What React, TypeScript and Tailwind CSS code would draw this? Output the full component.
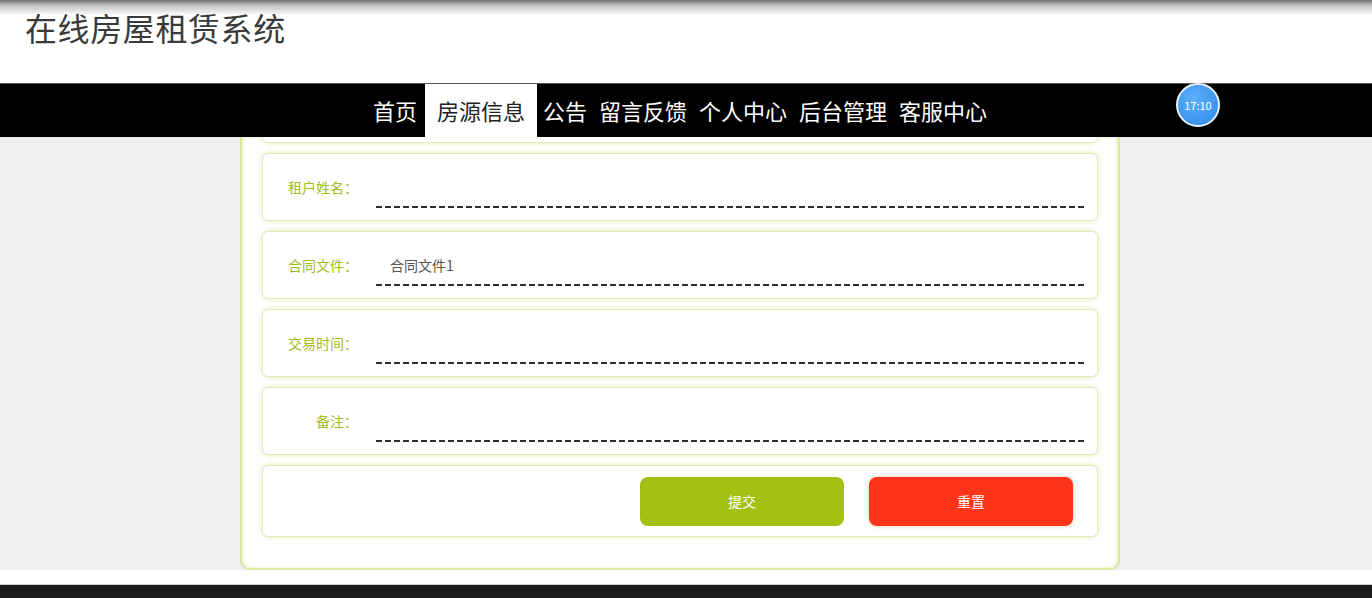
import React from "react";

const navItems = ["首页", "房源信息", "公告", "留言反馈", "个人中心", "后台管理", "客服中心"];

const fields = [
  { label: "租户姓名：", value: "" },
  { label: "合同文件：", value: "合同文件1" },
  { label: "交易时间：", value: "" },
  { label: "备注：", value: "" },
];

function FieldCard({ label, value }: { label: string; value: string }) {
  return (
    <div className="h-[68px] shrink-0 flex items-center rounded-md border border-[#e3ebbd] bg-white shadow-[0_0_5px_#dfe9ad]">
      <div className="w-[95px] text-right text-[14px] text-[#a2bc1c]">{label}</div>
      <div className="ml-[18px] mr-[12px] flex-1 h-[42px] flex items-center pl-[14px] bg-[repeating-linear-gradient(90deg,#2e2e2e_0px,#2e2e2e_6px,transparent_6px,transparent_9px)] bg-no-repeat bg-bottom bg-[length:100%_2px] text-[14px] text-[#555]">
        {value}
      </div>
    </div>
  );
}

export default function App() {
  return (
    <div className="w-[1372px] h-[598px] overflow-hidden bg-white font-['Noto_Sans_CJK_SC','Noto_Sans',sans-serif]">
      {/* title */}
      <header className="h-[83px] bg-[linear-gradient(to_bottom,#6f6f6f_0px,#bdbdbd_5px,#ffffff_15px)] pl-[25px] pt-[7px]">
        <h1 className="text-[32px] leading-[40px] text-[#3a3a3a] tracking-[0.6px]">在线房屋租赁系统</h1>
      </header>

      {/* nav */}
      <nav className="relative h-[54px] bg-black border-t border-[#555] flex justify-center pr-[12px]">
        {navItems.map((item) => (
          <a
            key={item}
            className={
              item === "房源信息"
                ? "h-full flex items-center ml-[2px] px-3 bg-white text-[#222] text-[22px]"
                : "h-full flex items-center px-[6px] text-white text-[22px]"
            }
          >
            {item}
          </a>
        ))}
        <div className="absolute left-[1176px] top-[-1px] w-[44px] h-[44px] rounded-full border-2 border-[#e8f3ff] bg-[radial-gradient(circle_at_40%_35%,#5fb0fb,#2a87ea)] flex items-center justify-center text-white text-[11px]">
          17:10
        </div>
      </nav>

      {/* content */}
      <main className="h-[433px] bg-[#efefef] overflow-hidden flex justify-center pr-[12px]">
        <div className="w-[880px] h-full bg-white border-x-2 border-b-2 border-[#dbe7a2] rounded-b-[10px] shadow-[inset_2px_0_3px_#eef4d2,inset_-2px_0_3px_#eef4d2] px-5 flex flex-col gap-[10px]">
          <div className="h-[68px] shrink-0 -mt-[62px] rounded-md border border-[#e3ebbd] bg-white shadow-[0_0_5px_#dfe9ad]" />
          {fields.map((f) => (
            <FieldCard key={f.label} label={f.label} value={f.value} />
          ))}
          <div className="h-[72px] shrink-0 flex items-center justify-end gap-[25px] pr-6 rounded-md border border-[#e3ebbd] bg-white shadow-[0_0_5px_#dfe9ad]">
            <button className="w-[204px] h-[49px] rounded-lg bg-[#a3c113] text-white text-[14px]">提交</button>
            <button className="w-[204px] h-[49px] rounded-lg bg-[#fd3417] text-white text-[14px] shadow-[0_0_4px_#f0c9a0]">重置</button>
          </div>
        </div>
      </main>

      <div className="h-[14px] bg-white" />
      <footer className="h-[14px] bg-[#1c1c1c] border-t border-[#d0d0d0]" />
    </div>
  );
}
